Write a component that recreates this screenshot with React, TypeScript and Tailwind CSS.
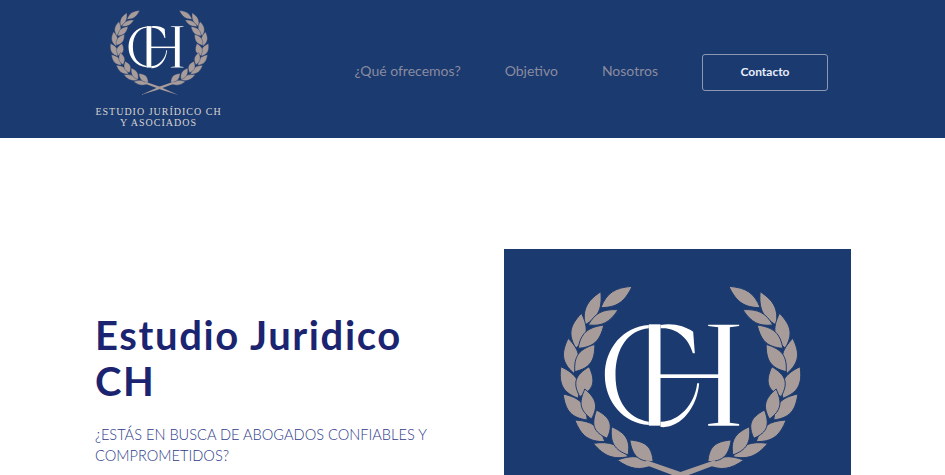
import React from 'react';

// leaves of the wreath, [tipX, tipY, baseX, baseY, width]
const leaves = [
  [397, 124, 303, 188, 30],
  [303, 140, 255, 240, 30],
  [355, 194, 265, 240, 26],
  [245, 205, 228, 310, 34],
  [312, 240, 235, 310, 32],
  [205, 280, 222, 385, 34],
  [285, 298, 225, 380, 34],
  [183, 365, 235, 460, 36],
  [268, 365, 240, 455, 38],
  [190, 447, 262, 525, 34],
  [255, 432, 275, 522, 32],
  [225, 525, 315, 590, 32],
  [290, 495, 322, 580, 36],
  [280, 595, 385, 635, 28],
  [335, 545, 385, 630, 32],
  [352, 645, 462, 660, 26],
  [390, 585, 460, 650, 34],
];

const leafPath = ([tx, ty, bx, by, w]: number[]) => {
  const dx = bx - tx;
  const dy = by - ty;
  const len = Math.hypot(dx, dy);
  const nx = (-dy / len) * w * 0.88;
  const ny = (dx / len) * w * 0.88;
  const c1x = tx + dx * 0.4;
  const c1y = ty + dy * 0.4;
  const c2x = tx + dx * 0.65;
  const c2y = ty + dy * 0.65;
  return `M${tx},${ty} C${c1x + nx},${c1y + ny} ${c2x + nx},${c2y + ny} ${bx},${by} C${c2x - nx},${c2y - ny} ${c1x - nx},${c1y - ny} ${tx},${ty}Z`;
};

const Branch = () => (
  <g fill="#a89c9b" stroke="#1b3a6f" strokeWidth="3">
    {leaves.map((leaf, i) => (
      <path key={i} d={leafPath(leaf)} />
    ))}
    <path d="M440,646 L540,680 L680,742 L560,706 L432,658 Z" stroke="none" />
  </g>
);

const Emblem: React.FC<{ className?: string }> = ({ className }) => (
  <svg viewBox="181 120 722 630" className={className}>
    <Branch />
    <g transform="translate(1084 0) scale(-1 1)">
      <Branch />
    </g>
    <g fill="#ffffff">
      <path d="M447,240 C370,245 315,310 315,390 C315,470 370,535 447,540 L447,530 C385,520 347,470 347,390 C347,310 385,255 447,250 Z" />
      <path d="M482,240 C520,233 555,243 580,260 L585,325 L579,325 C565,275 525,246 482,250 Z" />
      <path d="M482,546 C540,552 592,490 598,415 L592,415 C585,480 535,532 482,530 Z" />
      <rect x="447" y="238" width="35" height="304" />
      <rect x="480" y="388" width="180" height="11" />
      <path d="M625,239 L718,239 L718,243 L690,247 L690,533 L718,537 L718,542 L625,542 L625,537 L655,533 L655,247 L625,243 Z" />
    </g>
  </svg>
);

const navLinks = ['¿Qué ofrecemos?', 'Objetivo', 'Nosotros'];

export default function App() {
  return (
    <div className="h-screen overflow-hidden bg-white font-['Lato',sans-serif]">
      <header className="h-[138px] bg-[#1b3a6f] flex items-center pl-[95px] pr-[117px]">
        <div className="w-[127px] flex flex-col items-center">
          <Emblem className="w-[99px] h-[86px] ml-[2px] mt-[-1px]" />
          <div className="mt-[10px] text-center font-['Liberation_Serif',serif] text-[10px] leading-[11px] tracking-[1px] whitespace-nowrap text-[#d8d5d4]">
            <div>ESTUDIO JURÍDICO CH</div>
            <div>Y ASOCIADOS</div>
          </div>
        </div>
        <nav className="ml-auto flex items-center mt-[6px]">
          <div className="flex gap-[44px] mr-[44px] mt-[-2px]">
            {navLinks.map((link) => (
              <a key={link} className="text-[14px] text-[#8a8b9f] leading-[20px]">
                {link}
              </a>
            ))}
          </div>
          <a className="w-[126px] h-[37px] flex items-center justify-center rounded-[3px] border border-[#8d99b4] text-[12px] font-bold text-[#e8eefb]">
            Contacto
          </a>
        </nav>
      </header>
      <main className="flex pl-[95px]">
        <div className="w-[409px] pt-[174px] text-[#1b2470]">
          <h1 className="w-[340px] text-[40px] leading-[46px] font-bold tracking-[1.6px]">Estudio Juridico CH</h1>
          <p className="mt-[20px] w-[345px] text-[14.6px] leading-[21px] font-light text-[#2f3b8a] uppercase">
            ¿Estás en busca de abogados confiables y comprometidos?
          </p>
        </div>
        <div className="mt-[111px] w-[347px] h-[300px] bg-[#1b3a6f] flex justify-center pl-[6px] pt-[36px]">
          <Emblem className="w-[241px] h-[210px] shrink-0" />
        </div>
      </main>
    </div>
  );
}
